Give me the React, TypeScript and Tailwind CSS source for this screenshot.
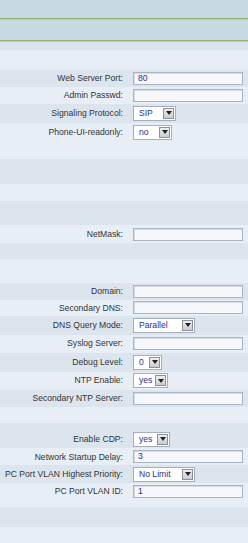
import React from "react";

type Row = {
  h: number;
  bg: string;
  label?: string;
  kind?: "input" | "select";
  value?: string;
  w?: number;
};

const A = "bg-[#e7eef5]";
const B = "bg-[#dce5ed]";

const rows: Row[] = [
  { h: 8, bg: "bg-[#d9e4ed]" },
  { h: 20, bg: A },
  { h: 17, bg: B, label: "Web Server Port:", kind: "input", value: "80" },
  { h: 17, bg: A, label: "Admin Passwd:", kind: "input", value: "" },
  { h: 19, bg: B, label: "Signaling Protocol:", kind: "select", value: "SIP", w: 43 },
  { h: 19, bg: A, label: "Phone-UI-readonly:", kind: "select", value: "no", w: 39 },
  { h: 18, bg: A },
  { h: 25, bg: B },
  { h: 17, bg: A },
  { h: 24, bg: B },
  { h: 18, bg: A, label: "NetMask:", kind: "input", value: "" },
  { h: 16, bg: B },
  { h: 24, bg: A },
  { h: 17, bg: B, label: "Domain:", kind: "input", value: "" },
  { h: 16, bg: A, label: "Secondary DNS:", kind: "input", value: "" },
  { h: 19, bg: B, label: "DNS Query Mode:", kind: "select", value: "Parallel", w: 62 },
  { h: 18, bg: A, label: "Syslog Server:", kind: "input", value: "" },
  { h: 19, bg: B, label: "Debug Level:", kind: "select", value: "0", w: 29 },
  { h: 18, bg: A, label: "NTP Enable:", kind: "select", value: "yes", w: 35 },
  { h: 17, bg: B, label: "Secondary NTP Server:", kind: "input", value: "" },
  { h: 17, bg: A },
  { h: 7, bg: B },
  { h: 18, bg: B, label: "Enable CDP:", kind: "select", value: "yes", w: 37 },
  { h: 17, bg: A, label: "Network Startup Delay:", kind: "input", value: "3" },
  { h: 18, bg: B, label: "PC Port VLAN Highest Priority:", kind: "select", value: "No Limit", w: 62 },
  { h: 17, bg: A, label: "PC Port VLAN ID:", kind: "input", value: "1" },
  { h: 7, bg: A },
  { h: 20, bg: B },
  { h: 16, bg: A },
];

function Arrow() {
  return (
    <div className="flex h-full w-[11px] shrink-0 items-center justify-center border border-[#8d9298] bg-gradient-to-b from-[#eceef0] to-[#c9cdd1]">
      <svg width="6" height="4" viewBox="0 0 6 4">
        <path d="M0 0 L6 0 L3 4 Z" fill="#222" />
      </svg>
    </div>
  );
}

function Control({ r }: { r: Row }) {
  if (r.kind === "input") {
    return (
      <div className="flex h-[13px] w-[110px] items-center border border-[#a9b4bf] bg-[#f5f7fa] pl-[4px] text-[8.6px] text-[#2e2e86] shadow-[inset_1px_1px_0_#d5dce3]">
        {r.value}
      </div>
    );
  }
  return (
    <div
      className="flex h-[15px] items-center border border-[#a3afbb] bg-white p-px"
      style={{ width: r.w }}
    >
      <div className="flex-1 whitespace-nowrap pl-[4px] text-[8.6px] text-[#2e2e86]">{r.value}</div>
      <Arrow />
    </div>
  );
}

export default function App() {
  return (
    <div
      className="flex h-[543px] w-[248px] flex-col overflow-hidden bg-[#e7eef5]"
      style={{ fontFamily: '"Liberation Sans", Arial, sans-serif' }}
    >
      <div className="h-[18px] bg-[#c9d9e4]" />
      <div className="h-px bg-[#93b36f]" />
      <div className="h-px bg-[#b9d0a6]" />
      <div className="h-[20px] bg-[#c9d9e4]" />
      <div className="h-px bg-[#93b36f]" />
      <div className="h-px bg-[#b9d0a6]" />
      {rows.map((r, i) => (
        <div key={i} className={`flex items-center ${r.bg}`} style={{ height: r.h }}>
          <div className="w-[124px] shrink-0 whitespace-nowrap pr-px text-right text-[8.6px] leading-none text-[#333]">
            {r.label}
          </div>
          <div className="ml-[9px]">{r.kind ? <Control r={r} /> : null}</div>
        </div>
      ))}
    </div>
  );
}
